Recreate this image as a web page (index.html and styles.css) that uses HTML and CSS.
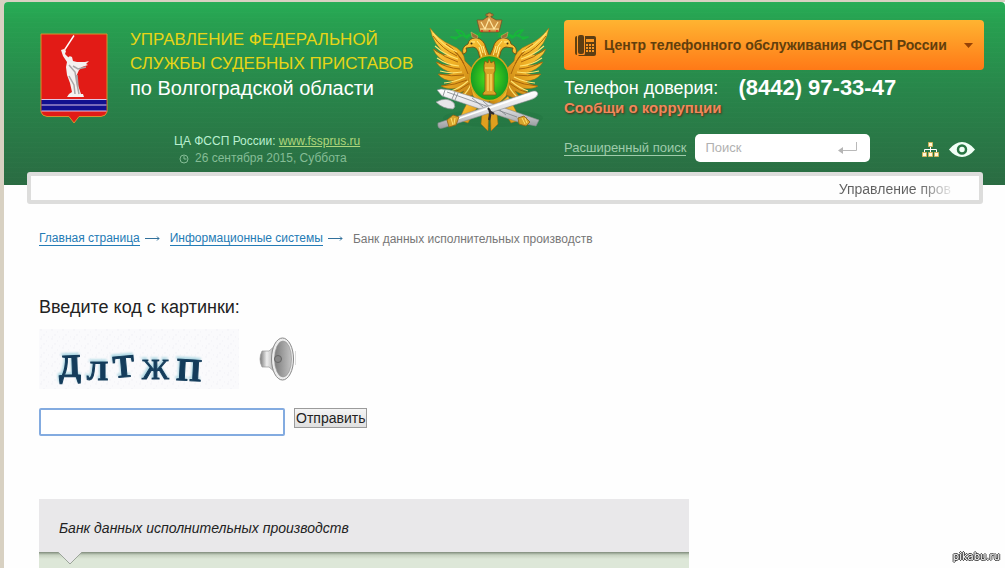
FILE: index.html
```html
<!DOCTYPE html>
<html lang="ru">
<head>
<meta charset="utf-8">
<title>Банк данных исполнительных производств</title>
<link rel="stylesheet" href="styles.css">
</head>
<body>
<div class="page">
<header class="header">
  <div class="brand">
    <div class="brand-top">
      <svg class="coat" viewBox="0 0 68 92" role="img" aria-label="Герб Волгоградской области">
        <path d="M1 1H67V79Q66 83 61 83.500H39L34 90L29 83.500H7Q2 83 1 79Z" fill="#e21b16" stroke="#d8912c"/>
        <path d="M1.500 67h65v11h-65z" fill="#11118f"/>
        <path d="M1.500 66.500h65M1.500 72h65M1.500 78h65" stroke="#dfc6e4" stroke-width="1"/>
        <path d="M34 2.500L24.500 17" stroke="#fff" stroke-width="1.400"/>
        <path d="M21 17l3-1 2 2-1 3 5 5-2-1q1-3 4-1l1 4 4 1 8 0 4-1-3 3 2 1-6 2-3 3-3 7 2 8 3 9h2l1 3H27l2-3 3-2-2-9-3-8-1-8 1-5-4-6z" fill="#f4f1ef"/>
        <path d="M29 32l6 7 2 12 2 10M33 33l5 3 8-2M29 43l5 9 1 9M37 42l1 12" fill="none" stroke="#aaa7a8" stroke-width="1.500"/>
      </svg>
      <h1 class="title"><span class="gold">УПРАВЛЕНИЕ ФЕДЕРАЛЬНОЙ<br>СЛУЖБЫ СУДЕБНЫХ ПРИСТАВОВ</span><span class="region">по Волгоградской области</span></h1>
    </div>
    <div class="meta">
      <p>ЦА ФССП России: <a href="#">www.fssprus.ru</a></p>
      <p class="date"><svg width="10" height="10" viewBox="0 0 10 10" aria-hidden="true"><circle cx="5" cy="5" r="4" fill="none" stroke="currentColor"/><path d="M5 2v3h2.500" fill="none" stroke="currentColor"/></svg>26 сентября 2015, Суббота</p>
    </div>
  </div>

  <svg class="eagle" viewBox="0 0 125 122" role="img" aria-label="Эмблема ФССП">
    <defs>
      <linearGradient id="gold" x1="0" y1="0" x2="1" y2="1"><stop offset="0" stop-color="#ffd54a"/><stop offset=".5" stop-color="#f0b026"/><stop offset="1" stop-color="#bd7a10"/></linearGradient>
      <radialGradient id="green"><stop offset="0" stop-color="#56e51b"/><stop offset="1" stop-color="#139b23"/></radialGradient>
      <linearGradient id="silver" x1="0" y1="0" x2="0" y2="1"><stop offset="0" stop-color="#fff"/><stop offset=".55" stop-color="#dcdcdf"/><stop offset="1" stop-color="#9b9ea2"/></linearGradient>
      <g id="half" stroke="#a0660c" stroke-width=".5" stroke-linejoin="round">
        <path d="M3 16Q12 28 24 33Q37 38 38 49L47 58 48 82 31 89Q33 83 37 79Q28 84 20 82Q27 80 31 76Q20 78 14 74Q22 73 27 69Q16 69 11 62Q19 64 26 61Q14 58 9 50Q16 54 24 53Q10 47 6 37Q13 43 20 43Q6 33 3 16Z" fill="url(#gold)"/>
        <path d="M6 24Q15 37 30 44M7 37Q18 46 31 50M10 50Q20 56 33 57M12 62Q24 65 37 63M15 74Q28 73 40 68M21 82Q33 79 43 71M32 88Q40 80 45 73M19 32Q31 39 37 52M27 39Q36 47 41 62" fill="none" stroke="#a7650b" stroke-width="1"/>
        <path d="M6 21Q16 34 30 40M8 34Q18 43 31 47M10 46Q20 53 32 54M13 59Q23 62 35 60M17 71Q28 70 38 65M24 79Q33 76 41 69M35 85Q42 78 44 72" fill="none" stroke="#ffe370" stroke-width="1.200"/>
        <path d="M62 51L54 50L51 39Q49 35 46 35L39 36Q41 41 36 42Q34 35 41 32Q42 26 49 26Q57 27 59 36L62 43Z" fill="url(#gold)" stroke="#754809" stroke-width=".8"/>
        <path d="M44 30h4M50 29q5 4 6 12M52 35l3 11M56 34l3 10" fill="none" stroke="#fff08a" stroke-width="1"/>
        <circle cx="44.500" cy="31.500" r="1" fill="#422b06" stroke="none"/>
        <path d="M50 49Q43 56 42 68L46 84 59 97 62 97V49Z" fill="url(#gold)"/>
        <path d="M44 84L37 97 32 108 41 111 48 99 53 92Z" fill="url(#gold)"/>
        <path d="M52 94L48 105 55 102 54 112 61 119 62 95" fill="#dfa01e"/>
        <path d="M54 25Q47 18 40 26Q34 20 29 27L24 25Q30 26 34 24L29 18Q37 18 38 25Q45 20 50 24L57 18" fill="none" stroke="#16b83a" stroke-width="1.700"/>
        <path d="M44 20l7 4-1 3-5-2z" fill="#9a7135" stroke="#e4b868"/>
      </g>
    </defs>
    <ellipse cx="66" cy="106" rx="50" ry="9" fill="#175b31" opacity=".15"/>
    <use href="#half"/><use href="#half" transform="translate(125 0) scale(-1 1)"/>
    <path d="M53 20L50 8 56 8 60 5H61V4H59V2H61V1H64V2H66V4H64V5L69 8 75 8 72 20Z" fill="#cf9543" stroke="#795024" stroke-width=".8"/>
    <path d="M53 17h19M54 10l4 7 4-10 5 10 4-7" fill="none" stroke="#ffe6a0" stroke-width="1.200"/>
    <circle cx="55" cy="19" r="1" fill="#d73225"/><circle cx="62.500" cy="19" r="1" fill="#d73225"/><circle cx="70" cy="19" r="1" fill="#d73225"/>
    <ellipse cx="62.500" cy="66" rx="19.500" ry="22.500" fill="url(#green)" stroke="#cfa51b" stroke-width="1.500"/>
    <path d="M58 79V61L57 59V53L58 49 61 51 62 47 64 51 67 49 68 53V59L67 61V79L69 81V83H56V81Z" fill="#daa327" stroke="#845812" stroke-width=".8"/>
    <path d="M61 62v17M64 62v17M58 56h9" stroke="#ffe16a" stroke-width="1.200"/>
    <path d="M10 78L14 77 23 78 43 84 112 108 109 114 94 111 15 84Z" fill="url(#silver)" stroke="#898e92" stroke-width=".6"/>
    <path d="M18 78l-2 6M28 80l-3 7M31 81l-3 7M45 86l11 9M56 89l11 10M69 95l10 8M96 104l-3 7M100 105l-3 7M20 80l70 25" stroke="#7d8388" stroke-width=".8"/>
    <path d="M9 90Q20 84 27 91Q29 95 26 97Q16 97 9 90Z" fill="#e7e7e9" stroke="#8f9696" stroke-width=".7"/>
    <path d="M11 111L103 80Q110 77 111 82 110 86 103 88L16 116Q10 118 11 111Z" fill="url(#silver)" stroke="#85898d" stroke-width=".6"/>
    <path d="M30 107L103 82" stroke="#fff" stroke-width="1.500"/>
    <path d="M61 96q4 4 1 12M62 99l5 3" fill="none" stroke="#302e31" stroke-width="2.200"/>
    <path d="M20 108l6-5 6 2-3 8-7 2zM91 106l6-2 6 6-4 4-7-2z" fill="#d7a42c" stroke="#906011" stroke-width=".8"/>
    <path d="M24 106l2 7M28 106l-1 6M95 106l3 6M98 106l2 5" stroke="#ffe06d"/>
  </svg>

  <div class="contact">
    <button class="call" type="button">
      <svg width="21" height="21" viewBox="0 0 21 21" aria-hidden="true"><path d="M0 3Q0 1 2 1V20Q0 20 0 18Z" fill="#61400f"/><rect x="3" width="6" height="19" rx="2" fill="#5c3d13"/><path d="M10 1h9q2 0 2 2v16q0 2-2 2H4l-1-1h6q1 0 1-2z" fill="#5c3d13"/><path d="M11 4h8v3h-8zM11 9h2v2h-2zM14 9h2v2h-2zM17 9h2v2h-2zM11 12h2v2h-2zM14 12h2v2h-2zM17 12h2v2h-2zM11 15h2v2h-2zM14 15h2v2h-2zM17 15h2v2h-2z" fill="#f99520"/></svg>
      <span>Центр телефонного обслуживания ФССП России</span>
      <svg width="9" height="5" viewBox="0 0 9 5" aria-hidden="true"><path d="M0 0h9L4.500 5z" fill="#964206"/></svg>
    </button>
    <p class="trust"><span>Телефон доверия:</span><strong>(8442) 97-33-47</strong></p>
    <a class="report" href="#">Сообщи о коррупции</a>
    <div class="tools">
      <a class="advanced" href="#">Расширенный поиск</a>
      <form class="search"><input type="search" placeholder="Поиск" aria-label="Поиск"><button type="button" aria-label="Найти"><svg width="19" height="13" viewBox="0 0 19 13"><path d="M18.500 0v8.500H3" fill="none" stroke="#b9b9b9"/><path d="M0 8.500L5 5v7z" fill="#b5b5b5"/></svg></button></form>
      <a class="sitemap" href="#" aria-label="Карта сайта"><svg width="17" height="15" viewBox="0 0 17 15"><path d="M8.500 4v7M2.500 11V7.500h12V11" fill="none" stroke="#fff"/><path d="M6.500.5h4v4h-4zM.5 10.500h4v4h-4zM6.500 10.500h4v4h-4zM12.500 10.500h4v4h-4z" fill="#fff7da" stroke="#d3b55b"/></svg></a>
      <a class="vision" href="#" aria-label="Версия для слабовидящих"><svg width="26" height="15" viewBox="0 0 26 15"><path d="M0 7.500Q6 0 13 0T26 7.500Q20 15 13 15T0 7.500Z" fill="#f1fff6"/><circle cx="13" cy="7.500" r="4" fill="#f1fff6" stroke="#287643" stroke-width="2.500"/></svg></a>
    </div>
  </div>
</header>
<div class="ticker"><span>Управление пров</span></div>

<main class="content">
  <nav class="crumbs" aria-label="Навигация">
    <a href="#">Главная страница</a><svg width="15" height="7" viewBox="0 0 15 7" aria-hidden="true"><path d="M0 3.500h14M12 1.500l2 2-2 2" fill="none" stroke="#31709b"/></svg>
    <a href="#">Информационные системы</a><svg width="15" height="7" viewBox="0 0 15 7" aria-hidden="true"><path d="M0 3.500h14M12 1.500l2 2-2 2" fill="none" stroke="#31709b"/></svg>
    <span>Банк данных исполнительных производств</span>
  </nav>
  <form class="captcha">
    <label for="code">Введите код с картинки:</label>
    <div class="challenge">
      <svg class="code-image" viewBox="0 0 200 60" role="img" aria-label="Код проверки">
        <defs>
          <pattern id="grain" width="11" height="9" patternUnits="userSpaceOnUse"><path d="M1 1h2M7 3h1M4 6h2M9 8h1M2 8h1" stroke="#f1f1f6"/></pattern>
        </defs>
        <path fill="#fafafc" d="M0 0h200v60H0z"/><path fill="url(#grain)" d="M0 0h200v60H0z"/>
        <g class="code-letters"><text x="20" y="48" transform="rotate(-2 20 48)">Д</text><text x="48" y="51" class="small">Л</text><text x="75" y="49" transform="rotate(-5 75 49)">Т</text><text x="103" y="50" class="thin">Ж</text><text x="137" y="51" transform="rotate(3 137 51)">П</text></g>
      </svg>
      <button class="sound" type="button" aria-label="Прослушать код"><svg width="38" height="46" viewBox="0 0 38 46">
        <defs><linearGradient id="metal"><stop offset="0" stop-color="#777"/><stop offset=".4" stop-color="#eee"/><stop offset="1" stop-color="#999"/></linearGradient><linearGradient id="cone"><stop offset="0" stop-color="#7b7b7b"/><stop offset="1" stop-color="#c3c3c3"/></linearGradient></defs>
        <path d="M10 15H3Q-1 23 3 31h7l8 7V8z" fill="url(#metal)" stroke="#999" stroke-width=".7"/>
        <ellipse cx="23.500" cy="23" rx="11" ry="21" fill="#ececec" stroke="#888"/>
        <ellipse cx="24" cy="23" rx="8.500" ry="18" fill="url(#cone)" stroke="#999" stroke-width=".7"/>
        <circle cx="19" cy="23" r="3.500" fill="#888" stroke="#666"/><path d="M36.500 15v14" stroke="#ddd"/>
      </svg></button>
    </div>
    <div class="answer"><input id="code" type="text"><button type="button">Отправить</button></div>
  </form>
  <section class="panel"><h2>Банк данных исполнительных производств</h2><div class="panel-body"><svg class="pointer" width="26" height="14" viewBox="0 0 26 14" aria-hidden="true"><path d="M1 0l12 12L25 0" fill="#e9e8ea" stroke="#9ca59a"/></svg></div></section>
</main>
</div>
<div class="watermark">pikabu.ru</div>
</body>
</html>
```
FILE: styles.css
```css
* { box-sizing: border-box; }
body { margin: 0; background: #d8d1c2; font-family: "Liberation Sans", Arial, sans-serif; font-size: 12px; color: #222; }
p, h1, h2 { margin: 0; font-weight: normal; }
button, input { font-family: inherit; }
svg { flex: none; }
.page { min-height: calc(100vh - 2px); margin: 2px 0 0 4px; background: #fefefe; display: flex; flex-direction: column; border-top-left-radius: 4px; }
.header { display: flex; padding: 0 21px 18px 36px; border-radius: 4px 4px 0 0; background: repeating-linear-gradient(180deg, rgba(255,255,255,.01) 0 1px, transparent 1px 5px), linear-gradient(#27ad56 0, #27a050 20px, #28854a 90px, #2a6b42 100%); }
.brand { width: 387px; flex: none; padding-top: 26px; }
.brand-top { display: flex; gap: 22px; align-items: flex-start; }
.coat { width: 68px; height: 92px; margin-top: 5px; }
.title { font-size: 17px; line-height: 24px; white-space: nowrap; }
.title span { display: block; }
.gold { color: #e8d516; }
.region { font-size: 20px; color: #fff; }
.meta { margin: 8px 0 0 134px; color: #b9efd0; line-height: 17px; }
.meta a { color: #b0d67c; }
.date { display: flex; gap: 6px; align-items: center; padding-left: 5px; color: #85bd96; }
.eagle { width: 125px; height: 122px; margin: 10px 12px 0 0; overflow: visible; }
.contact { flex: 1; min-width: 0; padding-top: 18px; }
.call { width: 100%; height: 50px; padding: 0 11px; border: 0; border-radius: 4px; display: flex; align-items: center; gap: 8px; background: linear-gradient(#ffb431, #ff7917); color: #623f0c; font-size: 14px; font-weight: bold; white-space: nowrap; }
.call span { flex: 1; text-align: left; }
.trust { display: flex; align-items: center; gap: 20px; margin-top: 6px; line-height: 24px; color: #fff; font-size: 18px; white-space: nowrap; }
.trust strong { font-size: 22px; }
.report { display: block; color: #f0875a; font-size: 15px; font-weight: bold; line-height: 16px; text-decoration: none; text-shadow: 1px 1px 2px #542d16; }
.tools { display: flex; align-items: center; margin-top: 18px; padding-right: 9px; }
.advanced { color: #9fcbab; font-size: 13px; line-height: 14px; text-decoration: none; border-bottom: 1px solid #9fcbab; white-space: nowrap; }
.search { width: 175px; height: 28px; margin: 0 auto 0 9px; display: flex; align-items: center; background: #fff; border-radius: 5px; }
.search input { flex: 1; min-width: 0; border: 0; outline: 0; background: none; padding: 0 0 2px 10px; font-size: 13px; }
.search input::placeholder { color: #b1b1b1; }
.search button { border: 0; background: none; padding: 0 13px 0 0; display: flex; }
.sitemap, .vision { display: flex; padding-top: 3px; }
.vision { margin-left: 10px; }
.ticker { position: relative; margin: -13px 22px 0 23px; height: 32px; border: 4px solid #dddddc; border-radius: 3px; background: #fefefe; padding-right: 28px; color: #666; font-size: 14px; line-height: 26px; text-align: right; white-space: nowrap; }
.ticker span { background: linear-gradient(90deg, #606060 80px, #fefefe 117px); background-clip: text; color: transparent; }
.content { flex: 1; display: flex; flex-direction: column; padding: 27px 35px 0; }
.crumbs { display: flex; align-items: center; line-height: 14px; white-space: nowrap; color: #777; }
.crumbs a { color: #247bb5; text-decoration: none; border-bottom: 1px solid #247bb5; }
.crumbs svg { margin: 0 10px 0 5px; }
.captcha { margin-top: 50px; }
.captcha label { display: block; font-size: 18px; line-height: 22px; }
.challenge { display: flex; align-items: center; gap: 20px; margin-top: 11px; }
.code-image { width: 200px; height: 60px; }
.code-letters { font-family: "Liberation Serif", serif; font-weight: bold; font-size: 32px; fill: #143c5b; stroke: #143c5b; stroke-width: 1; filter: drop-shadow(-1px -2px 1px #a9d6e2); }
.code-letters .small { font-size: 28px; }
.code-letters .thin { font-weight: normal; font-size: 30px; }
.sound { border: 0; background: none; padding: 0; display: flex; }
.answer { display: flex; align-items: flex-start; gap: 9px; margin-top: 19px; }
.answer input { width: 246px; height: 28px; border: 2px solid #83abe0; border-radius: 2px; outline: 0; padding: 0 6px; font-size: 16px; background: #fff; }
.answer button { height: 20px; padding: 0 1px; border: 1px solid #9b9b9b; background: linear-gradient(#f5f5f5, #dfdfdf); font-size: 14px; line-height: 16px; color: #222; }
.panel { width: 100%; max-width: 650px; margin-top: 63px; flex: 1; display: flex; flex-direction: column; }
.panel h2 { background: #e9e8ea; padding: 19px 20px 14px; font-size: 14px; line-height: 20px; font-style: italic; }
.panel-body { flex: 1; min-height: 14px; padding-left: 18px; background: linear-gradient(#7f8b7b, #c7d2c1 3px, #dde7d8 7px); }
.pointer { display: block; }
.watermark { position: fixed; right: 5px; bottom: 4px; font: 10px/14px "DejaVu Sans", sans-serif; color: #fff; text-shadow: 1px 0 #333, -1px 0 #333, 0 1px #333, 0 -1px #333; }
```
